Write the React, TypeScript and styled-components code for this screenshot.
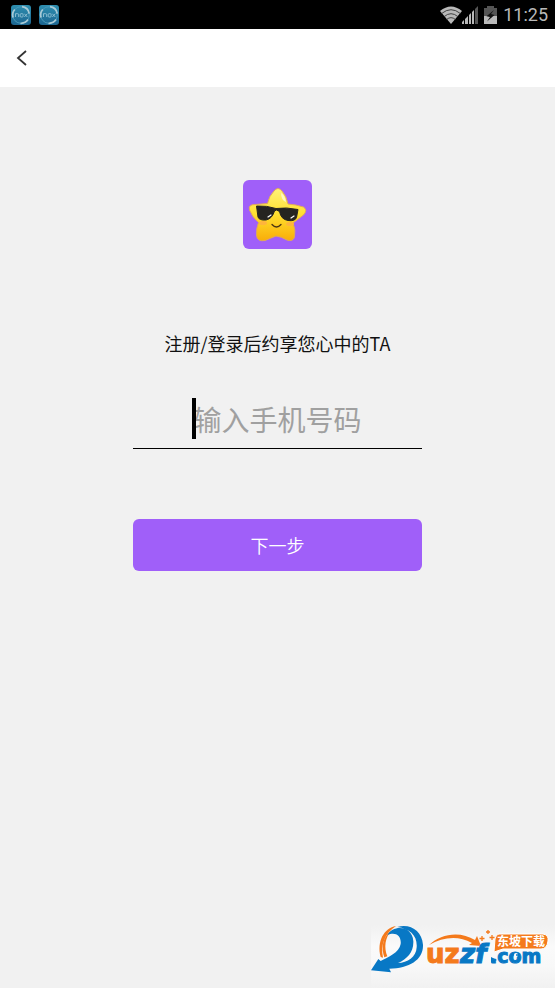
import React from "react";
import styled, { createGlobalStyle } from "styled-components";

const GlobalStyle = createGlobalStyle`
  *, *::before, *::after { box-sizing: border-box; }
  body {
    margin: 0;
    background: #f1f1f1;
    color: #111;
    font-family: "Noto Sans CJK SC", sans-serif;
  }
`;

const Page = styled.div`
  display: flex;
  flex-direction: column;
  min-height: 100vh;
`;

const StatusBar = styled.div`
  display: flex;
  align-items: center;
  justify-content: space-between;
  height: 29px;
  padding: 0 7px 0 10px;
  background: #000;
`;

const StatusGroup = styled.div<{ $gap: number }>`
  display: flex;
  align-items: center;
  gap: ${(p) => p.$gap}px;

  svg { display: block; }
`;

const Clock = styled.time`
  color: #b9b9b9;
  font: 18px/28px Roboto, sans-serif;
`;

const Header = styled.header`
  display: flex;
  align-items: center;
  height: 58px;
  padding: 0 10px;
  background: #fff;
`;

const BackButton = styled.button`
  display: flex;
  padding: 4px;
  border: 0;
  background: none;
  cursor: pointer;
`;

const Form = styled.form`
  display: flex;
  flex-direction: column;
  align-items: center;
  width: 52%;
  margin: 93px auto 0;
`;

const Title = styled.h1`
  margin: 80px 0 0;
  font-size: 18px;
  font-weight: 400;
  line-height: 28px;
  white-space: nowrap;
`;

const Field = styled.label`
  display: flex;
  justify-content: center;
  position: relative;
  width: 100%;
  height: 52px;
  margin-top: 40px;
  border-bottom: 1px solid #000;
`;

const PhoneInput = styled.input`
  width: 100%;
  height: 44px;
  padding: 0;
  border: 0;
  outline: 0;
  background: transparent;
  color: #111;
  font: 28px/44px "Noto Sans CJK SC", sans-serif;
  text-align: center;
  caret-color: transparent;

  &::placeholder { color: #a0a0a0; opacity: 1; }
`;

const Caret = styled.span`
  position: absolute;
  top: 1px;
  left: calc(50% - 86px);
  width: 4px;
  height: 41px;
  background: #000;
`;

const NextButton = styled.button`
  width: 100%;
  height: 52px;
  margin-top: 70px;
  border: 0;
  border-radius: 6px;
  background: #a05ff9;
  color: #fff;
  font: 350 18px/28px "Noto Sans CJK SC", sans-serif;
  cursor: pointer;
`;

const Watermark = styled.a`
  position: fixed;
  right: 0;
  bottom: 0;
  background: linear-gradient(#f1f1f1, #fafafa 35%, #f8f8f8 65%, #f1f1f1);

  svg { display: block; }
`;

const NoxIcon = () => (
  <svg width="22" height="22" viewBox="0 0 22 22" aria-hidden="true">
    <defs>
      <linearGradient id="nox" x2="0" y2="1">
        <stop stopColor="#2e8fb0" />
        <stop offset="1" stopColor="#1c6590" />
      </linearGradient>
    </defs>
    <rect x="1" y="1" width="20" height="20" rx="3" fill="url(#nox)" />
    <circle cx="11" cy="11" r="8.3" fill="none" stroke="#4a9aba" strokeWidth="1" />
    <path d="M12 2.7a8.3 8.3 0 0 1 7.2 7M3 13.5a8.3 8.3 0 0 1 1.8-8M18 15.6a8.3 8.3 0 0 1-7.5 3.7" fill="none" stroke="#a9cad6" strokeWidth="1.8" />
    <path d="M5.5 13V9.7h2.2q1 0 1 1V13M10.2 10.5q0-.8.8-.8h1.3q.8 0 .8.8v1.7q0 .8-.8.8H11q-.8 0-.8-.8zM14.3 9.7l3 3.3M17.3 9.7l-3 3.3" fill="none" stroke="#9fcbdc" strokeWidth=".8" />
  </svg>
);

const WifiIcon = () => (
  <svg width="22" height="18" viewBox="0 0 22 18" aria-hidden="true">
    <path d="M0 5Q11-4 22 5L11 18Z" fill="#b9b9b9" />
    <path d="M1.5 7.6Q11-.2 20.5 7.6M4 10.7Q11 4.7 18 10.7M6.5 13.6Q11 9.7 15.5 13.6" fill="none" stroke="#333" strokeWidth=".9" />
  </svg>
);

const SignalIcon = () => (
  <svg width="16" height="18" viewBox="0 0 16 18" aria-hidden="true">
    <path d="M0 18v-2l2-2v4zM3 18v-5l3-3v8zM7 18V9l2-2v11zM10 18V6l2-2v14z" fill="#b9b9b9" />
    <path d="M13 18V3l3-3v18z" fill="#555" />
  </svg>
);

const BatteryIcon = () => (
  <svg width="13" height="18" viewBox="0 0 13 18" aria-hidden="true">
    <path d="M0 2h3V0h7v2h3v8H0z" fill="#555" />
    <path d="M0 10h13v8H0z" fill="#b9b9b9" />
    <path d="M10 4 2.5 10.2 6 11l-3 4.5L10.5 9 7 8z" fill="#111" />
  </svg>
);

const StarLogo = () => (
  <svg width="69" height="69" viewBox="0 0 69 69" role="img" aria-label="Star">
    <defs>
      <linearGradient id="star" x2="0" y2="1">
        <stop stopColor="#fff27a" />
        <stop offset=".5" stopColor="#ffdf2e" />
        <stop offset="1" stopColor="#f9ad08" />
      </linearGradient>
    </defs>
    <rect width="69" height="69" rx="6" fill="#a05ff9" />
    <path d="M31 11Q35 6 39 11Q43.500 16 45 24Q53 24.500 60.500 27Q65 30 60.500 35L50 43Q53 50 51.500 57Q50 62 44 60Q38 56.500 33 56Q28 58 22 60.500Q14 62 13.500 55Q13 49 15.500 42.500Q9 37 6.500 30Q5 24.500 12 24.500L24.500 23.500Q26 16 31 11Z" fill="url(#star)" stroke="#dfa85d" strokeWidth="1" />
    <path d="M38 13q4 2 5 9-5-2-5-9z" fill="#fff7bf" />
    <ellipse cx="20" cy="43" rx="4" ry="2" fill="#ffb43c" />
    <ellipse cx="47" cy="44" rx="4" ry="2" fill="#ffb43c" />
    <path d="M13.500 26Q24 25.500 33 28.500Q43 27 55 29.500L53.500 37.500Q52 41.500 45 40.500Q38 39.500 36.500 31.500L33.500 30L31.500 31Q29 39 23 40Q16 40.500 15 37Z" fill="#252420" stroke="#252420" strokeWidth="1" strokeLinejoin="round" />
    <path d="m25 37 3-2M48 38l3-2" stroke="#fff" strokeWidth="1.2" strokeLinecap="round" />
    <path d="M29 44.500q4.500 5 9 0" fill="none" stroke="#4b3512" strokeWidth="1.3" strokeLinecap="round" />
  </svg>
);

const UzzfLogo = () => (
  <svg width="184" height="63" viewBox="6 7 184 63" role="img" aria-label="uzzf.com">
    <g transform="translate(3 4) scale(.3333)">
      <path d="M84 12C48 18 26 58 38 105L45 107C37 68 50 34 84 12Z" fill="#f47a1c" />
      <path d="M70 26C42 44 40 80 49 106L58 103C47 76 51 46 70 26Z" fill="#f47a1c" />
      <path d="M58 40C76 6 134 12 136 58C137 90 118 110 90 123C118 123 145 105 146 76C149 42 126 19 88 15C128 4 162 28 165 68C167 112 125 139 64 140L69 151L9 145L31 111L38 117C60 106 94 92 98 66C101 42 82 28 58 40Z" fill="#0878c5" />
    </g>
    <path d="M64 27C76 15 96 13 110 22L112 18L116 28L104 27L107 25C93 17 78 19 64 27Z" fill="#f47a1c" />
    <g fontFamily="DejaVu Sans, sans-serif" fontWeight="700" strokeWidth="1">
      <text x="61" y="45" fontSize="26" fill="#f47a1c" stroke="#f47a1c">uz</text>
      <text x="95" y="45" fontSize="26" fill="#0878c5" stroke="#0878c5" fontStyle="italic">zf</text>
      <text x="125" y="45" fontSize="19" fill="#0878c5" stroke="#0878c5">.com</text>
    </g>
    <path d="m126 39 6 3-6 3z" fill="#0878c5" />
    <path d="M134 16H178Q184 17 183 23Q182 31 176 31H138L129 34L130 21Q131 16 134 16Z" fill="#f47a1c" stroke="#fff" strokeWidth="1" />
    <text x="132" y="28" fontFamily="Noto Sans CJK SC, sans-serif" fontSize="12" fontWeight="700" fill="#fff">东坡下载</text>
    <path d="M117 18v5M114.500 20.500h5M123 12v4M121 14h4M127 17v5M124.500 19.500h5" stroke="#f47a1c" strokeWidth="1.300" />
    <circle cx="151" cy="37" r="2" fill="#fff" />
    <circle cx="152" cy="37" r="1" fill="#0878c5" />
  </svg>
);

export default function App() {
  return (
    <Page>
      <GlobalStyle />
      <StatusBar>
        <StatusGroup $gap={6}>
          <NoxIcon />
          <NoxIcon />
        </StatusGroup>
        <StatusGroup $gap={6}>
          <StatusGroup $gap={0}>
            <WifiIcon />
            <SignalIcon />
          </StatusGroup>
          <BatteryIcon />
          <Clock>11:25</Clock>
        </StatusGroup>
      </StatusBar>
      <Header>
        <BackButton type="button" aria-label="返回">
          <svg width="16" height="18" viewBox="0 0 16 18" aria-hidden="true">
            <path d="M12 2 4 9l8 7" fill="none" stroke="#333" strokeWidth="1.8" />
          </svg>
        </BackButton>
      </Header>
      <main>
        <Form onSubmit={(e) => e.preventDefault()}>
          <StarLogo />
          <Title>注册/登录后约享您心中的TA</Title>
          <Field>
            <PhoneInput type="tel" placeholder="输入手机号码" aria-label="输入手机号码" />
            <Caret />
          </Field>
          <NextButton type="submit">下一步</NextButton>
        </Form>
      </main>
      <Watermark href="#" aria-label="东坡下载 uzzf.com">
        <UzzfLogo />
      </Watermark>
    </Page>
  );
}
